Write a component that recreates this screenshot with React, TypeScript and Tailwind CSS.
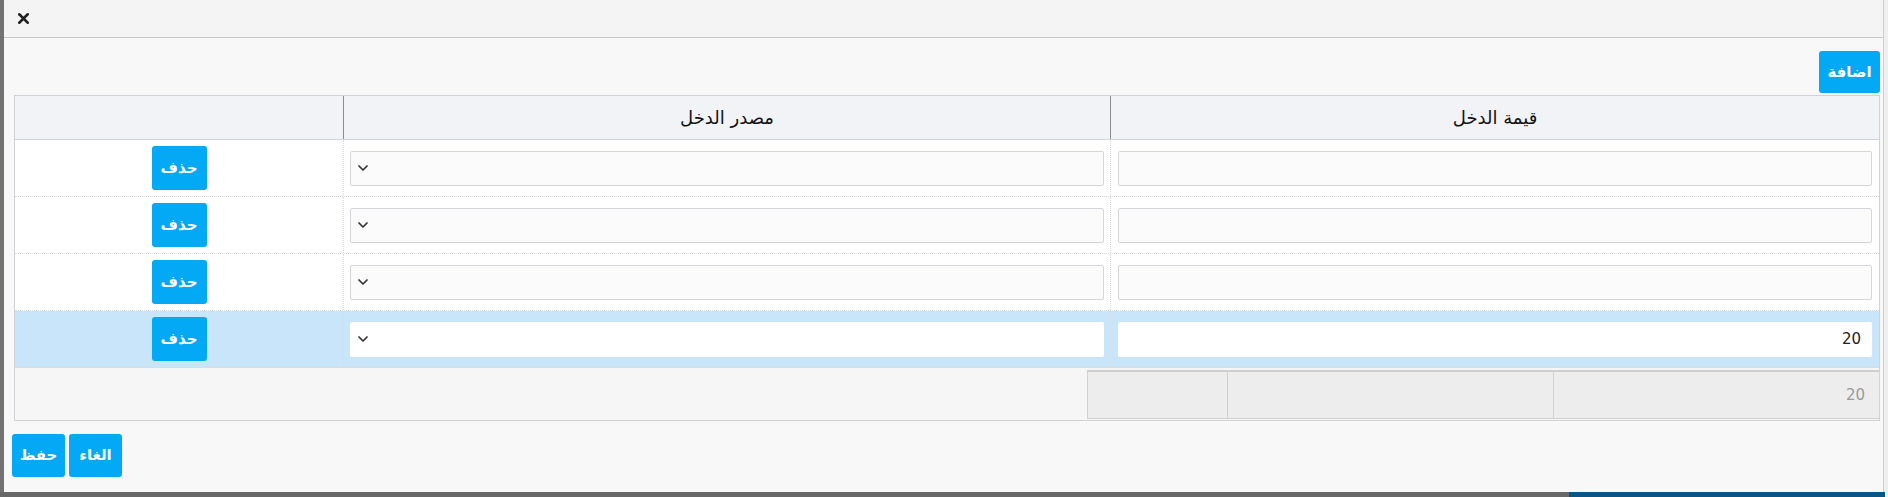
import React from 'react';
import { X, ChevronDown } from 'lucide-react';

const rows = [
  { value: '', selected: false },
  { value: '', selected: false },
  { value: '', selected: false },
  { value: '20', selected: true },
];

function BlueButton({ label, className = '' }: { label: string; className?: string }) {
  return (
    <button
      className={`bg-[#03a9f4] text-white font-bold text-[15px] rounded-[3px] flex items-center justify-center ${className}`}
    >
      {label}
    </button>
  );
}

function IncomeRow({ value, selected }: { value: string; selected: boolean }) {
  const inputCls = selected
    ? 'bg-white border border-transparent'
    : 'bg-[#fbfbfc] border border-[#d4d6dc]';
  return (
    <div
      className={`grid grid-cols-[769px_767px_328px] h-[57px] border-b border-dotted border-[#d9d9d9] ${
        selected ? 'bg-[#c9e5fa]' : 'bg-white'
      }`}
    >
      <div className="px-[7px] flex items-center border-l border-dotted border-[#dcdcdc]">
        <div className={`w-full h-[35px] rounded-[2px] flex items-center px-[10px] text-[15px] text-[#222] ${inputCls}`}>
          {value}
        </div>
      </div>
      <div className="px-[6px] flex items-center border-l border-dotted border-[#dcdcdc]">
        <div className={`w-full h-[35px] rounded-[2px] flex items-center justify-end px-[4px] ${inputCls}`}>
          <ChevronDown size={16} strokeWidth={2.6} className="text-[#333]" />
        </div>
      </div>
      <div className="flex items-center justify-center">
        <BlueButton label="حذف" className="w-[55px] h-[44px]" />
      </div>
    </div>
  );
}

export default function App() {
  return (
    <div
      className="w-[1888px] h-[497px] bg-[#efefef] flex flex-col overflow-hidden"
      style={{ fontFamily: '"DejaVu Sans", "Noto Sans", sans-serif' }}
    >
      <div className="flex h-[492px]">
        <div className="w-[4px] bg-[#727272]" />
        <div className="w-[1880px] bg-[#f8f8f8] border-r border-[#cfcfcf] flex flex-col">
          <div className="h-[38px] border-b border-[#c6c6c6] bg-[#f4f4f4] flex items-center pl-[11px]">
            <X size={17} strokeWidth={3.6} className="text-[#222]" />
          </div>

          <div className="pl-[10px] pr-[3px]">
            <div className="flex justify-end mt-[13px]">
              <BlueButton label="اضافة" className="w-[61px] h-[42px]" />
            </div>

            <div dir="rtl" className="mt-[2px] border border-[#cfd3d8] bg-[#f6f6f6]">
              <div className="grid grid-cols-[769px_767px_328px] h-[44px] bg-[#f1f3f6] border-b border-[#cfd5dd] text-[18px] text-[#111]">
                <div className="flex items-center justify-center border-l border-[#8c8c8c]">قيمة الدخل</div>
                <div className="flex items-center justify-center border-l border-[#8c8c8c]">مصدر الدخل</div>
                <div />
              </div>

              {rows.map((r, i) => (
                <IncomeRow key={i} value={r.value} selected={r.selected} />
              ))}

              <div className="h-[52px] pt-[2px]">
                <div className="flex h-[49px] w-[792px] border-t-2 border-[#1d2b55] border-b border-[#cfcfcf] bg-[#ededee]">
                  <div className="w-[326px] border-l border-[#d2d2d2] flex items-center px-[14px] text-[15px] text-[#9a9a9a]">
                    20
                  </div>
                  <div className="w-[326px] border-l border-[#d2d2d2]" />
                  <div className="flex-1 border-l border-[#d2d2d2]" />
                </div>
              </div>
            </div>

            <div className="flex gap-[4px] mt-[13px] ml-[-2px]">
              <BlueButton label="حفظ" className="w-[53px] h-[43px]" />
              <BlueButton label="الغاء" className="w-[53px] h-[43px]" />
            </div>
          </div>
        </div>
      </div>
      <div className="flex h-[5px]">
        <div className="w-[1569px] bg-[#686868]" />
        <div className="w-[316px] bg-[#0b5585]" />
      </div>
    </div>
  );
}
